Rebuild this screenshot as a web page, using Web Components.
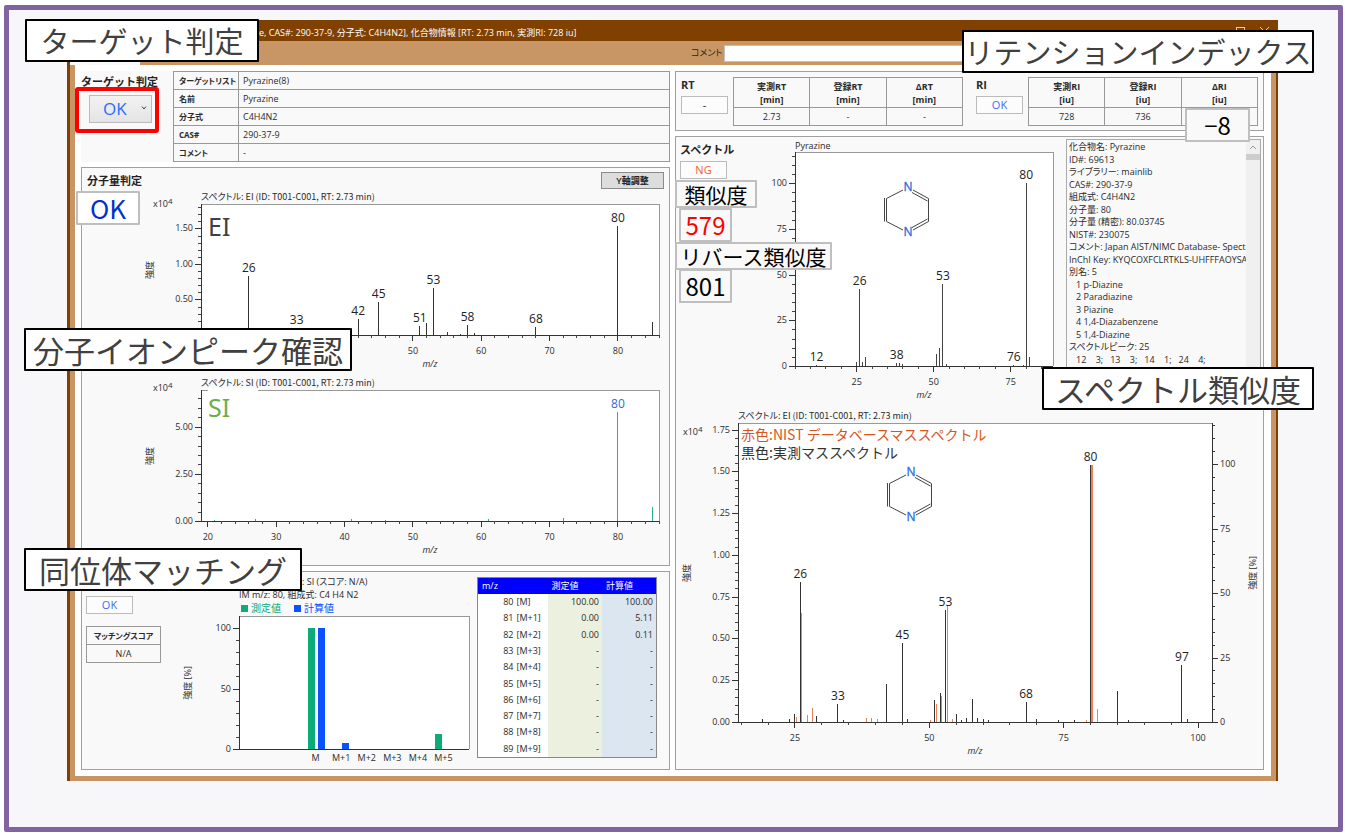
<!DOCTYPE html>
<html lang="ja">
<head>
<meta charset="utf-8">
<title>Pyrazine 化合物情報</title>
<style>
html{background:#fff}
body{margin:0;font:9px/12px "Open Sans","Noto Sans CJK JP",sans-serif;font-feature-settings:"palt";color:#2b2b2b}
</style>
</head>
<body>
<analysis-slide></analysis-slide>

<template id="t-slide">
<style>
:host{display:block;margin:5px 2px 1px 4px;border:5px solid #8064a2;border-radius:2px;background:#f7f7fa;position:relative;padding:10px 60px 46px 58px}
note-callout{position:absolute;z-index:5}
.target{left:16px;top:9px}
.ion{left:15px;top:318px}
.iso{left:15px;top:538px}
.ri{right:24px;top:20px}
.sim{right:24px;top:357px}
.cols{display:grid;grid-template-columns:minmax(0,1fr) minmax(0,1fr);gap:5px;align-items:start}
.col{display:flex;flex-direction:column;gap:5px;min-width:0}
.head{display:flex;height:91px;background:#f9f9f9}
.verdict{width:92px;flex:none;position:relative}
.verdict label{display:block;font:bold 11px/20px "Noto Sans CJK JP",sans-serif;color:#222}
.verdict .ring{position:absolute;left:-6px;top:16px;width:76px;height:38px;border:4px solid #f00;border-radius:3px;z-index:4}
.pick{position:relative;margin:4px 0 0 8px;width:63px;height:28px}
select{appearance:none;width:63px;height:28px;border:1px solid #bbb;border-radius:0;background:linear-gradient(#f2f2f2,#e4e4e4);font:17px/24px "Open Sans",sans-serif;color:#2b6bff;padding:0 0 0 13px;margin:0}
.pick svg{position:absolute;right:5px;top:10px}
prop-table{flex:1;min-width:0}
.bar{display:flex;justify-content:space-between;padding:4px 5px 0}
h2{margin:0;font:bold 11px/16px "Noto Sans CJK JP",sans-serif;color:#222;white-space:nowrap}
.bar button{width:63px;height:17px;border:1px solid #8a8a8a;background:#ddd;font:inherit;font-weight:600;line-height:13px;padding:0;color:#222}
.mol{padding-bottom:4px}
.tag{font:25px/30px "Noto Sans",sans-serif;color:#404040;display:block;width:50px;margin-left:7px;padding-top:7px}
.tag.si{color:#70ad47;background:#fff;margin-top:-2px;padding-top:4px}
.iso-row{display:flex}
.side{width:75px;flex:none;padding:24px 0 0 4px}
.side table{border-collapse:collapse;width:75px;margin-top:12px;text-align:center}
.side th,.side td{border:1px solid #999;height:17px;padding:0}
.side th{font-size:8px}
.iso-row mass-chart{flex:1;min-width:0}
isotope-table{flex:none;width:180px;margin:5px 12px 0 0}
.retention{display:flex;gap:13px;padding:5px 5px 4px}
.retention>*{flex:1}
.spec{display:flex;position:relative}
.spec .left{width:47px;flex:none;padding:4px 0 0 4px}
.spec .left verdict-badge{margin-top:4px}
.spec mass-chart{flex:1;min-width:0}
library-text{width:195px;flex:none;margin:2px 2px 0 5px}
.ok{left:-6px;top:23px}
.s1{left:-1px;top:43px}.s2{left:3px;top:71px}.s3{left:-1px;top:105px}.s4{left:3px;top:132px}
.d8{right:13px;top:36px}
group-panel{position:relative}
.legend{font:14px/18px "Noto Sans CJK JP",sans-serif;font-feature-settings:"palt" 0;color:#333;margin:2px 0 0 3px;white-space:nowrap}
.legend div:first-child{color:#d8551c}
pyrazine-structure{position:absolute;top:26px;left:84px}
.low pyrazine-structure{top:40px;left:144px}
</style>
<note-callout class="target">ターゲット判定</note-callout>
<note-callout class="ion">分子イオンピーク確認</note-callout>
<note-callout class="iso">同位体マッチング</note-callout>
<note-callout class="ri">リテンションインデックス</note-callout>
<note-callout class="sim">スペクトル類似度</note-callout>
<app-window>
 <div class="cols">
  <div class="col">
   <div class="head">
    <div class="verdict"><label for="v">ターゲット判定</label>
     <div class="pick"><select id="v"><option>OK</option><option>NG</option></select><svg width="6" height="6" viewBox="0 0 6 6"><path d="M1 1.5L3 4L5 1.5" fill="none" stroke="#444"/></svg></div>
     <div class="ring"></div></div>
    <prop-table></prop-table>
   </div>
   <group-panel class="mol">
    <div class="bar"><h2>分子量判定</h2><button type="button">Y軸調整</button></div>
    <note-callout class="ok" kind="value" tone="navy" size="ok">OK</note-callout>
    <mass-chart id="ei"><span class="tag">EI</span></mass-chart>
    <mass-chart id="si"><span class="tag si">SI</span></mass-chart>
   </group-panel>
   <group-panel>
    <div class="iso-row">
     <div class="side"><verdict-badge tone="ok">OK</verdict-badge>
      <table><tr><th>マッチングスコア</th></tr><tr><td>N/A</td></tr></table></div>
     <mass-chart id="im"></mass-chart>
     <isotope-table></isotope-table>
    </div>
   </group-panel>
  </div>
  <div class="col">
   <group-panel>
    <div class="retention">
     <retention-block name="RT" unit="min" verdict="-" values="2.73,-,-"></retention-block>
     <retention-block name="RI" unit="iu" verdict="OK" values="728,736,"></retention-block>
    </div>
    <note-callout class="d8" kind="value" size="d8">−8</note-callout>
   </group-panel>
   <group-panel>
    <div class="spec">
     <div class="left"><h2>スペクトル</h2><verdict-badge tone="ng">NG</verdict-badge></div>
     <note-callout class="s1" kind="name" size="n3">類似度</note-callout>
     <note-callout class="s2" kind="value" tone="red" size="v3">579</note-callout>
     <note-callout class="s3" kind="name" size="n7">リバース類似度</note-callout>
     <note-callout class="s4" kind="value" size="v3">801</note-callout>
     <mass-chart id="lib"><pyrazine-structure></pyrazine-structure></mass-chart>
     <library-text></library-text>
    </div>
    <mass-chart id="cmp" class="low"><div class="legend"><div>赤色:NIST データベースマススペクトル</div><div>黒色:実測マススペクトル</div></div><pyrazine-structure></pyrazine-structure></mass-chart>
   </group-panel>
  </div>
 </div>
</app-window>
</template>

<template id="t-window">
<style>
:host{display:block;background:#fff;border:solid #804000;border-width:0 2px 0 3px}
header{background:#804000;color:#fff;height:21px;line-height:25px;display:flex;justify-content:space-between;overflow:hidden}
header span{padding-left:189px;white-space:nowrap}
header svg{margin-right:1px;flex:none}
.tools{display:flex;background:#c89664;height:24px;align-items:center;color:#3a2208}
.tab{width:70px;height:24px;background:#f9f9f9;flex:none}
.tools label{margin-left:551px;width:33px;white-space:nowrap}
.tools input{flex:1;height:17px;box-sizing:border-box;border:1px solid #c0c0c0;background:#fff;padding:0 2px;margin-right:24px;font:inherit;min-width:0}
main{border:5px solid #c89664;border-top:0;padding:6px 7px 6px 6px;background:#fff}
</style>
<header><span>e, CAS#: 290-37-9, 分子式: C4H4N2], 化合物情報 [RT: 2.73 min, 実測RI: 728 iu]</span>
<svg width="40" height="21" viewBox="0 0 40 21" fill="none" stroke="#f4c89a"><rect x="1.500" y="7.500" width="8" height="8"/><path d="M25 7L34 16M34 7L25 16"/></svg></header>
<div class="tools"><div class="tab"></div><label for="c">コメント</label><input id="c" type="text"></div>
<main><slot></slot></main>
</template>

<script>
const define=(name,cls)=>customElements.define(name,cls);
class Base extends HTMLElement{
  constructor(){super();this.attachShadow({mode:'open'});}
  connectedCallback(){if(!this.done){this.done=true;this.shadowRoot.innerHTML=this.render();}}
}
define('note-callout',class extends Base{
  render(){return `<style>
  :host{display:grid;place-items:center;box-sizing:border-box;border:2px solid #000;background:#fff;color:#404040;font:31px/39px "Noto Sans CJK JP",sans-serif;height:43px;white-space:nowrap;border-radius:1px}
  :host(.target){width:234px;font-size:29px}:host(.ion){width:328px}:host(.iso){width:278px}:host(.ri){width:352px;font-size:29px}:host(.sim){width:272px}
  :host([kind]){border-color:#bfbfbf;background:#f9f9f9;color:#000}
  :host([kind=name]){font-size:21px;line-height:24px;height:28px}
  :host([kind=value]){font-size:24px;line-height:30px;height:34px}
  :host([size=n3]){width:82px}:host([size=n7]){width:157px}:host([size=v3]){width:53px}:host([size=d8]){width:65px}:host([size=ok]){width:64px}
  :host([tone=red]){color:#f00}:host([tone=navy]){color:#0033cc;background:#fff;font-size:26px}
  </style><slot></slot>`}
});
define('app-window',class extends Base{render(){return document.getElementById('t-window').innerHTML}});
define('group-panel',class extends Base{render(){return `<style>:host{display:block;border:1px solid #a0a0a0;background:#f9f9f9}</style><slot></slot>`}});
define('verdict-badge',class extends Base{render(){return `<style>
  :host{display:block;box-sizing:border-box;width:47px;height:18px;border:1px solid #bbb;text-align:center;font-size:11px;line-height:16px;background:#fcfcfc}
  :host([tone=ok]){color:#3b6cf0}:host([tone=ng]){color:#f06030}</style><slot></slot>`}});
define('prop-table',class extends Base{render(){
  const r=[['ターゲットリスト','Pyrazine(8)'],['名前','Pyrazine'],['分子式','C4H4N2'],['CAS#','290-37-9'],['コメント','-']];
  return `<style>:host{display:block}table{border-collapse:collapse;width:100%;table-layout:fixed;background:#f9f9f9}
  th,td{border:1px solid #999;height:17px;padding:0 4px;text-align:left}th{width:59px;padding:0 0 0 5px;white-space:nowrap;font-size:8px}</style>
  <table>${r.map(([a,b])=>`<tr><th scope="row">${a}</th><td>${b}</td></tr>`).join('')}</table>`}});
define('retention-block',class extends Base{render(){
  const n=this.getAttribute('name'),u=this.getAttribute('unit'),v=this.getAttribute('verdict');
  return `<style>:host{display:flex;gap:5px;min-width:0}.l{width:47px;flex:none}b{display:block;font-size:11px;line-height:16px}
  verdict-badge{margin-top:3px}table{flex:1;width:100%;border-collapse:collapse;table-layout:fixed;text-align:center}
  th,td{border:1px solid #999;padding:0;height:17px}th{height:29px;line-height:13px}</style>
  <div class="l"><b>${n}</b><verdict-badge tone="${v==='OK'?'ok':''}">${v}</verdict-badge></div>
  <table><tr>${['実測','登録','Δ'].map(p=>`<th scope="col">${p}${n}<br>[${u}]</th>`).join('')}</tr>
  <tr>${this.getAttribute('values').split(',').map(x=>`<td>${x}</td>`).join('')}</tr></table>`}});
define('isotope-table',class extends Base{render(){
  const m=['100.00','0.00','0.00'],c=['100.00','5.11','0.11'];
  return `<style>:host{display:block}table{width:100%;height:181px;border-collapse:collapse;background:#fff;border:1px solid #888;table-layout:fixed;font-size:9px}
  th{background:#00f;color:#fff;font-weight:400;height:16px;text-align:left;padding:0 4px}td{padding:0 3px;text-align:right}
  td:nth-child(1){padding:0}td:nth-child(2){text-align:left}td:nth-child(3){background:#ebf1de}td:nth-child(4){background:#dce6f1}
  col:nth-child(1){width:36px}col:nth-child(2){width:34px}</style>
  <table><colgroup><col><col><col><col></colgroup><tr><th colspan="2">m/z</th><th>測定値</th><th>計算値</th></tr>
  ${[...Array(10).keys()].map(i=>`<tr><td>${80+i}</td><td>[M${i?'+'+i:''}]</td><td>${m[i]||'-'}</td><td>${c[i]||'-'}</td></tr>`).join('')}</table>`}});
define('library-text',class extends Base{render(){
  const t=['化合物名: Pyrazine','ID#: 69613','ライブラリー: mainlib','CAS#: 290-37-9','組成式: C4H4N2','分子量: 80','分子量 (精密): 80.03745','NIST#: 230075','コメント: Japan AIST/NIMC Database- Spectru','InChI Key: KYQCOXFCLRTKLS-UHFFFAOYSA','別名: 5','   1 p-Diazine','   2 Paradiazine','   3 Piazine','   4 1,4-Diazabenzene','   5 1,4-Diazine','スペクトルピーク: 25','   12    3;   13    3;   14    1;   24    4;'];
  return `<style>:host{display:flex;box-sizing:border-box;border:1px solid #aaa;height:250px}
  .t{flex:1;min-width:0;overflow:hidden;white-space:pre;padding:1px 0 0 2px;display:grid;grid-template-rows:repeat(18,1fr);height:225px}
  .b{width:14px;background:#f0f0f0;flex:none}.b i{display:block;height:6px;background:#cdcdcd}
  button{display:block;width:14px;height:14px;border:0;padding:0;background:#f0f0f0}svg{display:block;margin:auto}</style>
  <div class="t">${t.map(x=>`<div>${x}</div>`).join('')}</div>
  <div class="b"><button type="button" aria-label="上へ"><svg width="8" height="6" viewBox="0 0 8 6"><path d="M1 5L4 2L7 5" fill="none" stroke="#999"/></svg></button><i></i></div>`}});
define('pyrazine-structure',class extends Base{render(){return `<style>:host{display:block;width:58px;height:64px}svg{display:block}text{font:12px "Open Sans",sans-serif;fill:#2b6be0;stroke:#2b6be0;stroke-width:.3;text-anchor:middle}</style>
  <svg width="58" height="64" viewBox="0 0 58 64" fill="none" stroke="#444"><path d="M24 12L7.500 20.500V43.500L24 52M34 12L49.500 20.500V43.500L34 52M5.500 20V43.500M33 14.500L48.500 23M33 49.500L48.500 41"/>
  <text x="29" y="13">N</text><text x="29" y="58">N</text></svg>`}});

/* Spectrum plots: x in percent so that they follow the width, y in pixels. */
const charts={
 ei:{ml:119,mr:10,mt:15,ph:131,mb:40,x:[19,86],y:[0,1.845],xt:[50,10,2],yt:[.5,.5,.1],dec:2,titles:[['スペクトル: EI (ID: T001-C001, RT: 2.73 min)',-4,'n']],yl:'強度',exp:[-39,3],
  p:[[26,.83,1],[33,.1,1],[42,.22,1],[45,.47,1],[51,.12,1],[52,.17],[53,.665,1],[55,.04],[57,.02],[58,.135,1],[59,.03],[68,.11,1],[80,1.54,1],[85,.18]],pc:'#333'},
 si:{ml:119,mr:10,mt:15,ph:131,mb:40,x:[19,86],y:[0,6.95],xt:[20,10,2],yt:[0,2.5,.5],dec:2,titles:[['スペクトル: SI (ID: T001-C001, RT: 2.73 min)',-4,'n']],yl:'強度',exp:[-39,1],
  p:[[21,.05],[27,.08],[41,.08],[46,.05],[61,.12],[72,.17],[80,5.8,1],[85,.75]],pc:'#2fb07f',lc:'#2b6be0'},
 im:{ml:78,mr:8,mt:44,ph:133,mb:20,x:[77,86],y:[0,110],yt:[0,50,10],dec:0,yl:'強度 [%]',
  titles:[[': SI (スコア: N/A)',-31,'',63],['IM m/z: 80, 組成式: C4 H4 N2',-18]],legend:1,
  bars:[[80,100,-8,'#0cac79'],[80,100,2,'#0a52ff'],[81,5.1,1,'#0a52ff'],[85,12,-8,'#0cac79']],cats:['M','M+1','M+2','M+3','M+4','M+5']},
 lib:{ml:68,mr:8,mt:15,ph:214,mb:42,x:[5,88.7],y:[0,117],xt:[25,25,5],yt:[0,25,5],dec:0,titles:[['Pyrazine',-3]],
  p:[[12,.5,1],[25,2],[26,42,1],[27,2],[28,5],[38,1.5,1],[39,1.5],[40,1],[51,6.7],[52,10],[53,45,1],[54,1],[76,.5,1],[79,.8],[80,100,1],[81,5]],pc:'#444'},
 cmp:{ml:62,mr:51,mt:15,ph:299,mb:47,x:[14.4,102.6],y:[0,1.79],xt:[25,25,5],yt:[0,.25,.05],dec:2,titles:[['スペクトル: EI (ID: T001-C001, RT: 2.73 min)',-4,'n']],yl:'強度',exp:[-46,12],right:1,
  p:[[19,.015],[24,.015],[25,.05],[26,.84,1],[29,.035],[33,.11,1],[34,.01],[42,.23],[45,.475,1],[46,.02],[51,.13],[52,.175],[53,.67,1],[55,.045],[56,.01],[57,.025],[58,.14],[59,.025],[60,.015],[61,.01],[68,.12,1],[70,.015],[74,.01],[77,.01],[80,1.54,1],[85,.185],[87,.01],[97,.34,1],[98,.015]],pc:'#333',
  q:[[25.3,.03],[26.3,.65],[27.3,.04],[28.3,.085],[38.3,.025],[39.3,.025],[40.3,.015],[50.3,.01],[51.3,.105],[52.3,.155],[53.3,.7],[54.3,.02],[79.3,.01],[80.2,1.54],[80.3,1.54],[81.3,.08]]}
};
define('mass-chart',class extends Base{render(){
  const c=charts[this.id],H=c.ph,X=v=>((v-c.x[0])/(c.x[1]-c.x[0])*100).toFixed(3)+'%',Y=v=>Math.round(H-v/c.y[1]*H);
  let s='',L=(x1,y1,x2,y2,k)=>{s+=`<line x1="${x1}" y1="${y1}" x2="${x2}" y2="${y2}" stroke="${k}"/>`};
  const T=(x,y,t,a='start',cl='')=>{s+=`<text x="${x}" y="${y}" text-anchor="${a}" class="${cl}">${t}</text>`};
  s+=`<rect width="100%" height="${H}" fill="#fff"/>`;
  L(0,0,'100%',0,'#999');
  (c.q||[]).forEach(([m,v])=>L(X(m),Y(v),X(m),H,'#ef7f55'));
  (c.p||[]).forEach(([m,v,l])=>{L(X(m),Y(v),X(m),H,c.pc);if(l)s+=`<text x="${X(m)}" y="${Y(v)-4}" text-anchor="middle" class="pk" style="fill:${c.lc||'#222'}">${m}</text>`});
  (c.bars||[]).forEach(([m,v,dx,k])=>{s+=`<rect x="${X(m)}" y="${Y(v)}" width="7" height="${H-Y(v)}" fill="${k}" style="translate:${dx}px"/>`});
  L(0,0,0,H,'#333');L(0,H,'100%',H,'#333');L('100%',0,'100%',H,c.right?'#333':'#999');
  const [y0,ys,ym]=c.yt;
  for(let i=0;i*ym<c.y[1];i++)L(-3,Y(i*ym),0,Y(i*ym),'#444');
  for(let i=0;y0+i*ys<c.y[1];i++){const v=y0+i*ys;L(-6,Y(v),0,Y(v),'#333');T(-8,Y(v)+3,v.toFixed(c.dec),'end')}
  if(c.xt){const [x0,xs,xm]=c.xt;
   for(let v=Math.ceil(c.x[0]/xm)*xm;v<=c.x[1];v+=xm)L(X(v),H,X(v),H+3,'#444');
   for(let v=x0;v<=c.x[1];v+=xs){L(X(v),H,X(v),H+6,'#333');T(X(v),H+19,v,'middle')}
   T('50%',H+32,'m/z','middle','it')}
  (c.cats||[]).forEach((t,i)=>T(X(80+i),H+12,t,'middle'));
  c.titles.forEach(([t,y,cl='',x=0])=>T(x,y,t,'start',cl));
  if(c.legend)s+='<rect x="2" y="-11" width="7" height="7" fill="#0cac79"/><text x="12" y="-4" class="g">測定値</text><rect x="55" y="-11" width="7" height="7" fill="#0a52ff"/><text x="65" y="-4" class="b">計算値</text>';
  if(c.yl)s+=`<text transform="translate(-48 ${Math.round(H/2)}) rotate(-90)" text-anchor="middle">${c.yl}</text>`;
  if(c.exp)s+=`<text x="${c.exp[0]-9}" y="${c.exp[1]}">x10<tspan dy="-3" class="sm">4</tspan></text>`;
  let r='';
  if(c.right){const k=2.58;for(let v=0;v<=115;v+=5){const y=Math.round(H-v*k);r+=`<line x1="0" y1="${y}" x2="${v%25?3:6}" y2="${y}" stroke="#333"/>`;if(v%25==0)r+=`<text x="8" y="${y+3}">${v}</text>`}
   r+=`<text transform="translate(44 ${Math.round(H/2)}) rotate(-90)" text-anchor="middle">強度 [%]</text>`}
  return `<style>:host{display:block;position:relative}svg{display:block;overflow:visible;shape-rendering:crispEdges}
  .in{width:calc(100% - ${c.ml+c.mr}px)}
  text{font-size:9px;fill:#2b2b2b}.n{font-family:"Noto Sans CJK JP",sans-serif}.pk{font-size:12px}.it{font-style:italic}.sm{font-size:8px}.g{fill:#0cac79;font-size:10px}.b{fill:#0a52ff;font-size:10px}
  .over{position:absolute;left:${c.ml}px;top:${c.mt}px}</style>
  <svg width="100%" height="${c.mt+H+c.mb}"><svg class="in" x="${c.ml}" y="${c.mt}" height="${H}">${s}<svg x="100%" y="0">${r}</svg></svg></svg><div class="over"><slot></slot></div>`}});
define('analysis-slide',class extends Base{render(){return document.getElementById('t-slide').innerHTML}});
</script>
</body>
</html>
